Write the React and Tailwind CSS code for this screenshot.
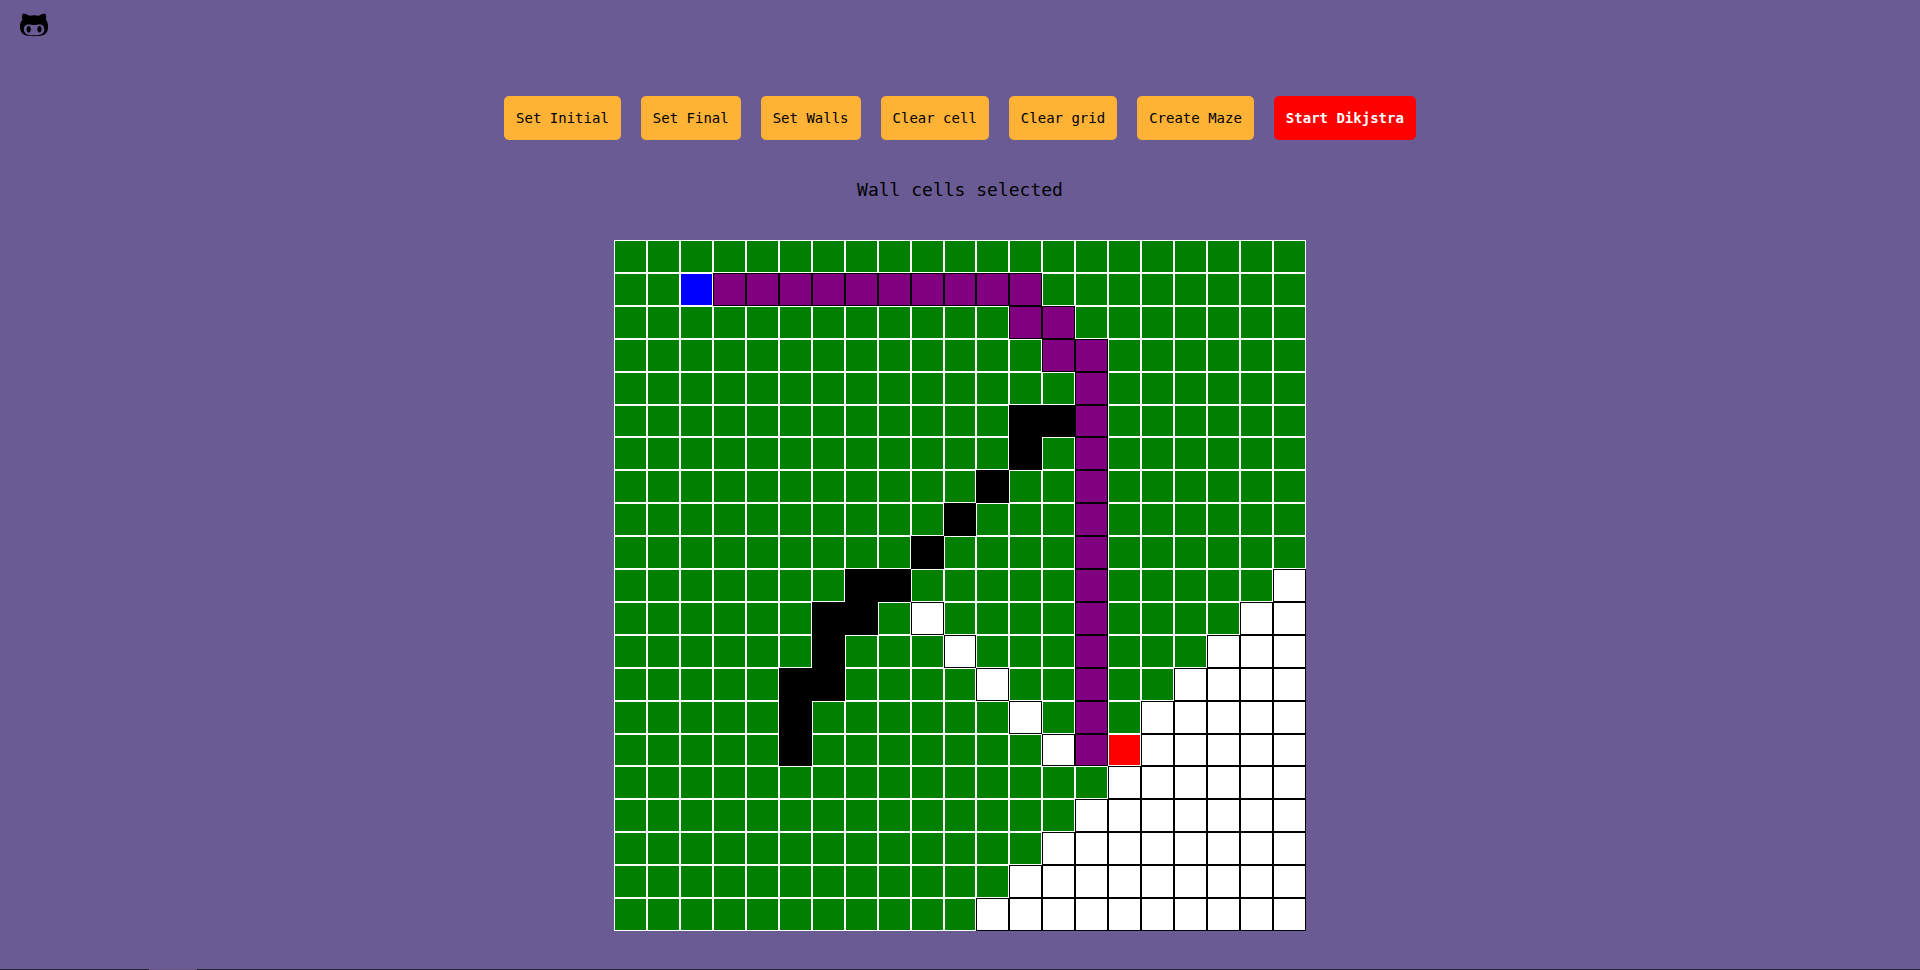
import { useState } from "react";
import { FaGithubAlt } from "react-icons/fa";

// g = visited, w = unvisited, b = wall, p = shortest path, i = initial, f = final
const INITIAL_ROWS = [
  "ggggggggggggggggggggg",
  "ggippppppppppgggggggg",
  "ggggggggggggppggggggg",
  "gggggggggggggppgggggg",
  "ggggggggggggggpgggggg",
  "ggggggggggggbbpgggggg",
  "ggggggggggggbgpgggggg",
  "gggggggggggbggpgggggg",
  "ggggggggggbgggpgggggg",
  "gggggggggbggggpgggggg",
  "gggggggbbgggggpgggggw",
  "ggggggbbgwggggpggggww",
  "ggggggbgggwgggpgggwww",
  "gggggbbggggwggpggwwww",
  "gggggbggggggwgpgwwwww",
  "gggggbgggggggwpfwwwww",
  "gggggggggggggggwwwwww",
  "ggggggggggggggwwwwwww",
  "gggggggggggggwwwwwwww",
  "ggggggggggggwwwwwwwww",
  "gggggggggggwwwwwwwwww",
];

const CELLS = {
  g: { name: "visited", style: "border-white bg-[#008000]" },
  w: { name: "empty", style: "border-black bg-white" },
  b: { name: "wall", style: "border-black bg-black" },
  p: { name: "path", style: "border-black bg-[#800080]" },
  i: { name: "initial", style: "border-white bg-[#0000ff]" },
  f: { name: "final", style: "border-white bg-[#ff0000]" },
};

const TOOLS = [
  { label: "Set Initial", message: "Initial cell selected", paint: "i" },
  { label: "Set Final", message: "Final cell selected", paint: "f" },
  { label: "Set Walls", message: "Wall cells selected", paint: "b" },
  { label: "Clear cell", message: "Clear cell selected", paint: "w" },
];

function ToolButton({ children, onClick }) {
  return (
    <button
      type="button"
      onClick={onClick}
      className="h-11 cursor-pointer rounded-[5px] bg-[#feb236] px-3 text-sm text-black"
    >
      {children}
    </button>
  );
}

export default function App() {
  const [cells, setCells] = useState(() => INITIAL_ROWS.join("").split(""));
  const [tool, setTool] = useState(TOOLS[2]);

  const paint = (index) =>
    setCells((prev) => prev.map((c, i) => (i === index ? tool.paint : c)));
  const clear = () => setCells((prev) => prev.map(() => "w"));
  const maze = () =>
    setCells((prev) => prev.map(() => (Math.random() < 0.3 ? "b" : "w")));

  return (
    <div className="flex min-h-screen flex-col bg-[#6b5b95] font-['DejaVu_Sans_Mono',monospace] text-black">
      <header className="flex h-24 items-start px-[19px] pt-2.5">
        <a href="https://github.com" aria-label="GitHub">
          <FaGithubAlt className="size-[30px]" />
        </a>
      </header>

      <main className="flex grow flex-col items-center pb-[38px]">
        <div className="flex flex-wrap justify-center gap-5">
          {TOOLS.map((t) => (
            <ToolButton key={t.label} onClick={() => setTool(t)}>
              {t.label}
            </ToolButton>
          ))}
          <ToolButton onClick={clear}>Clear grid</ToolButton>
          <ToolButton onClick={maze}>Create Maze</ToolButton>
          <button
            type="button"
            className="h-11 cursor-pointer rounded-[5px] bg-[#ff0000] px-3 text-sm font-bold text-white"
          >
            Start Dikjstra
          </button>
        </div>

        <p className="py-9 text-lg leading-7">{tool.message}</p>

        <div className="grid aspect-[692/691] w-full max-w-[692px] grid-cols-21 grid-rows-21">
          {cells.map((c, i) => (
            <button
              key={i}
              type="button"
              aria-label={`Row ${Math.floor(i / 21) + 1}, column ${(i % 21) + 1}: ${CELLS[c].name}`}
              onClick={() => paint(i)}
              className={`border ${CELLS[c].style}`}
            />
          ))}
        </div>
      </main>

      <footer className="flex h-px bg-[#231f2c]">
        <div className="ml-[149px] w-12 bg-[#64567f]" />
      </footer>
    </div>
  );
}
